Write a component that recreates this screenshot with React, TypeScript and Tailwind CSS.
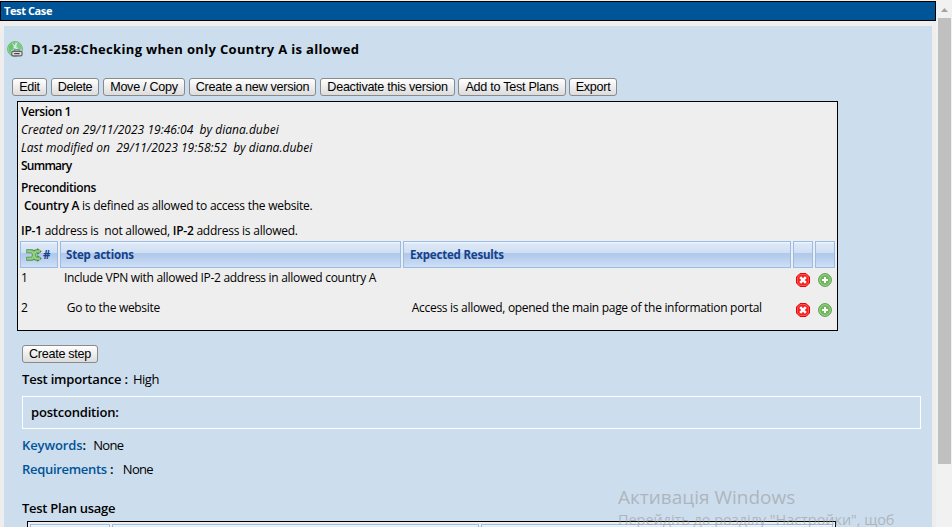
import type { ReactNode } from "react";

function Btn({ w, children }: { w: string; children: ReactNode }) {
  return (
    <button
      className={`${w} flex h-[18px] shrink-0 items-center justify-center whitespace-nowrap rounded-[3px] border border-[#8a8a8a] bg-linear-to-b from-white to-[#dcdcdc] font-['Liberation_Sans',Arial,sans-serif] text-[12.6px] leading-none tracking-[-0.28px] text-black`}
    >
      {children}
    </button>
  );
}

function GlobeIcon() {
  return (
    <svg className="h-4 w-4 shrink-0" viewBox="0 0 16 16">
      <circle cx="8" cy="8" r="7.4" fill="#a9d8d0" stroke="#6bb573" />
      <path d="M1.5 6Q3.5 1.5 8 1.2L8.5 3L6 5.5L7 7.5L4 9.5L3.5 13Q1 10 1.5 6Z" fill="#6cc566" />
      <path d="M10.5 1.5Q14 3 14.8 7.5L12.5 8.5L10 5.5Z" fill="#7ccb70" />
      <path d="M5.5 2.5L10 8.5M9.5 2L7 7" stroke="#e4f7f0" strokeWidth=".9" />
      <rect x="4.7" y="10.3" width="10.4" height="4.6" rx="1.6" fill="#dedede" stroke="#5f6563" strokeWidth="1.2" />
      <path d="M7.2 12.6h5.4" stroke="#444" strokeWidth="1.2" />
      <path d="M7.2 10V8.8h5.2V10" fill="none" stroke="#777" />
    </svg>
  );
}

function ShuffleIcon() {
  return (
    <svg className="h-[14px] w-4 shrink-0" viewBox="0 0 16 14" fill="none">
      <path d="M.3 3.3H5.5C9 3.3 7 10.7 10.5 10.7H12M.3 10.7H5.5C9 10.7 7 3.3 10.5 3.3H12" stroke="#4b9146" strokeWidth="4" />
      <path d="M11.3 0L15.8 3.5L11.3 7ZM11.3 7L15.8 10.5L11.3 14Z" fill="#47893f" />
      <path d="M1.1 3.3H5.5C9 3.3 7 10.7 10.5 10.7H14M1.1 10.7H5.5C9 10.7 7 3.3 10.5 3.3H14" stroke="#96d085" strokeWidth="2.2" />
    </svg>
  );
}

function DeleteIcon() {
  return (
    <svg className="h-[14px] w-[14px]" viewBox="0 0 14 14">
      <path d="M4 .5H10L13.5 4V10L10 13.5H4L.5 10V4Z" fill="#f32222" stroke="#f00000" />
      <path d="M4.3 1.5H9.7L12.5 4.3V9.7L9.7 12.5H4.3L1.5 9.7V4.3Z" fill="none" stroke="#ff6a6a" strokeWidth=".7" />
      <path d="M4.2 4.2L9.8 9.8M9.8 4.2L4.2 9.8" stroke="#fff" strokeWidth="2.6" />
    </svg>
  );
}

function AddIcon() {
  return (
    <svg className="h-[14px] w-[14px]" viewBox="0 0 14 14">
      <circle cx="7" cy="7" r="6.4" fill="#6fb559" stroke="#5aa050" />
      <circle cx="7" cy="7" r="5.3" fill="none" stroke="#a5d795" strokeWidth=".9" />
      <path d="M7 4V10M4 7H10" stroke="#fff" strokeWidth="2" />
    </svg>
  );
}

const headCell =
  "flex h-full items-center border border-[#99bbe8] bg-[linear-gradient(#f4f9fe_0px,#dce8f7_2px,#cfdff3_11px,#b0c8ea_11px,#b3cbec_14px,#cfdff5_25px)] font-['Noto_Sans',sans-serif] text-[11.5px] font-bold tracking-[-0.2px] text-[#15428b] whitespace-pre";

function StepRow({ n, action, result }: { n: string; action: ReactNode; result?: ReactNode }) {
  return (
    <div className="flex h-[30px] items-start whitespace-pre tracking-[-0.3px]">
      <div className="w-[43px] pl-px leading-[18px]">{n}</div>
      <div className="w-[346px] leading-[18px]">{action}</div>
      <div className="w-[387px] leading-[18px]">{result}</div>
      <div className="mt-1 w-[22px]">
        <DeleteIcon />
      </div>
      <div className="mt-1">
        <AddIcon />
      </div>
    </div>
  );
}

export default function App() {
  return (
    <div className="relative flex h-[527px] w-[952px] overflow-hidden bg-[#eeeeee] font-['Open_Sans','Noto_Sans',sans-serif] text-[12px] leading-[18px] text-black">
      <div className="w-[936px] shrink-0 pt-px">
        <header className="flex h-5 items-center border border-black bg-[#005498] pl-[3px] text-[11px] font-bold tracking-[-0.4px] text-white">
          Test Case
        </header>
        <main className="mx-1 mt-[5px] h-[501px] overflow-hidden bg-[#ccdded]">
          <div className="flex h-[46px] items-center gap-2 pl-[3px]">
            <GlobeIcon />
            <h1 className="whitespace-pre text-[13px] font-bold tracking-[0.33px]">D1-258:Checking when only Country A is allowed</h1>
          </div>
          <div className="mt-[6px] flex pl-2">
            <Btn w="mr-1 w-[35px]">Edit</Btn>
            <Btn w="mr-1 w-[48px]">Delete</Btn>
            <Btn w="mr-1 w-[82px]">Move / Copy</Btn>
            <Btn w="mr-1 w-[127px]">Create a new version</Btn>
            <Btn w="mr-[3px] w-[135px]">Deactivate this version</Btn>
            <Btn w="mr-[3px] w-[108px]">Add to Test Plans</Btn>
            <Btn w="w-[48px]">Export</Btn>
          </div>
          <section className="ml-[13px] mt-[5px] h-[230px] w-[821px] border border-black bg-[#eeeeee] px-[2px] pt-px">
            <div className="whitespace-pre pl-px">
              <p className="font-semibold tracking-[-0.4px]">Version 1</p>
              <p className="italic tracking-[0.03px]">Created on 29/11/2023 19:46:04  by diana.dubei</p>
              <p className="italic tracking-[0.03px]">Last modified on  29/11/2023 19:58:52  by diana.dubei</p>
              <p className="font-semibold tracking-[-0.75px]">Summary</p>
              <p className="mt-1 font-semibold tracking-[-0.4px]">Preconditions</p>
              <p className="tracking-[-0.25px]">
                {" "}
                <span className="font-semibold">Country A</span> is defined as allowed to access the website.
              </p>
              <p className="mt-[7px] tracking-[-0.24px]">
                <span className="font-semibold">IP-1</span> address is  not allowed, <span className="font-semibold">IP-2</span> address is allowed.
              </p>
            </div>
            <div className="mt-px flex h-[27px] gap-[2px]">
              <div className={`${headCell} w-[38px] pl-[5px]`}>
                <ShuffleIcon />
                <span className="ml-px">#</span>
              </div>
              <div className={`${headCell} w-[341px] pl-[5px]`}>Step actions</div>
              <div className={`${headCell} w-[388px] pl-[6px]`}>Expected Results</div>
              <div className={`${headCell} w-5`} />
              <div className={`${headCell} w-5`} />
            </div>
            <div className="mt-px">
              <StepRow n="1" action={"\u200aInclude VPN with allowed IP-2 address in allowed country A"} />
              <StepRow
                n="2"
                action={"\u200a Go to the website"}
                result=" Access is allowed, opened the main page of the information portal"
              />
            </div>
          </section>
          <div className="mt-[14px] pl-[18px]">
            <Btn w="w-[76px]">Create step</Btn>
            <div className="whitespace-pre text-[13px] leading-5 tracking-[-0.2px]">
              <p className="mt-[6px]">
                <span className="font-semibold">Test importance :</span> <span className="ml-[2px] tracking-[-0.5px]">High</span>
              </p>
              <div className="mt-[7px] flex h-[33px] w-[899px] items-center border border-white pb-[2px] pl-2 font-semibold">postcondition:</div>
              <p className="mt-[6px]">
                <span className="font-semibold tracking-[-0.1px] text-[#005498]">Keywords</span>
                <span className="font-semibold">:</span>
                {"  "}
                <span className="ml-px tracking-[-0.7px]">None</span>
              </p>
              <p className="mt-1">
                <span className="font-semibold tracking-[-0.3px] text-[#005498]">Requirements</span>
                <span className="font-semibold"> :</span>
                {"  "}
                <span className="ml-[3px] tracking-[-0.7px]">None</span>
              </p>
              <p className="mt-[19px] font-semibold tracking-[-0.27px]">Test Plan usage</p>
            </div>
            <div className="ml-[5px] mt-[3px] flex h-10 w-[809px] gap-[2px] border border-black bg-[#eeeeee] p-[2px]">
              <div className={`${headCell} w-[80px]`} />
              <div className={`${headCell} w-[367px]`} />
              <div className={`${headCell} w-[352px]`} />
            </div>
          </div>
        </main>
      </div>
      <aside className="flex h-full w-4 flex-col bg-[#f1f1f1]">
        <div className="flex h-[18px] items-end justify-center pb-[6px]">
          <svg className="h-1 w-[7px]" viewBox="0 0 7 4">
            <path d="M0 4L3.5 0L7 4Z" fill="#a3a3a3" />
          </svg>
        </div>
        <div className="ml-[2px] h-[446px] w-[13px] bg-[#c0c0c0]" />
      </aside>
      <div className="pointer-events-none absolute left-[618px] top-[484px] whitespace-pre text-[#999999]/60">
        <p className="text-[19px] leading-[26px]">Активація Windows</p>
        <p className="text-[14.5px] leading-[20px] tracking-[-0.05px]">Перейдіть до розділу "Настройки", щоб</p>
      </div>
    </div>
  );
}
